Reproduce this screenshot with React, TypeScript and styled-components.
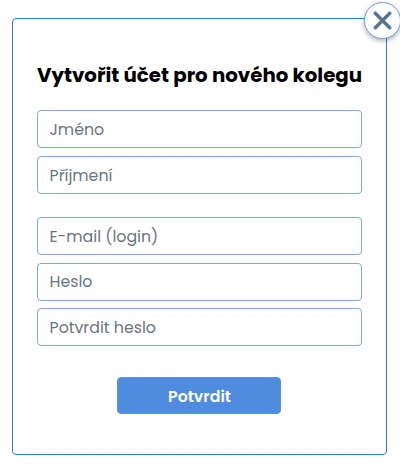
import React from "react";
import styled, { createGlobalStyle } from "styled-components";

const GlobalStyle = createGlobalStyle`
  *, *::before, *::after { box-sizing: border-box; }
  body {
    margin: 0;
    background: #fff;
    font-family: Poppins, Inter, sans-serif;
    overflow: hidden;
  }
`;

const Page = styled.main`
  height: 465px;
  padding: 18px 13px 10px 12px;
`;

const Dialog = styled.section`
  position: relative;
  width: 375px;
  height: 437px;
  border: 1px solid #2f7bdc;
  border-radius: 4px;
  background: #fff;
  padding: 40px 24px 0;
`;

const CloseButton = styled.button`
  position: absolute;
  top: -17.5px;
  right: -14.5px;
  width: 37px;
  height: 37px;
  padding: 0;
  display: flex;
  align-items: center;
  justify-content: center;
  border: 1px solid #6da0e6;
  border-radius: 50%;
  background: #fff;
  box-shadow: 0 2px 5px rgba(0, 0, 0, 0.32);
`;

const Title = styled.h1`
  margin: 0;
  height: 32px;
  line-height: 32px;
  font-size: 19.8px;
  font-weight: 700;
  white-space: nowrap;
  color: #000;
`;

const Form = styled.form`
  display: flex;
  flex-direction: column;
  gap: 23px;
  padding-top: 19px;
`;

const FieldGroup = styled.div<{ $gap: number }>`
  display: flex;
  flex-direction: column;
  gap: ${(p) => p.$gap}px;
`;

const Field = styled.input`
  width: 325px;
  height: 38px;
  padding: 0 11.5px;
  border: 1px solid #7ca8e8;
  border-radius: 4px;
  background: #fff;
  font: 400 15.8px Poppins, Inter, sans-serif;
  outline: none;

  &::placeholder {
    color: #6c757d;
    opacity: 1;
  }
`;

const SubmitButton = styled.button`
  align-self: center;
  width: 164px;
  height: 37px;
  margin: 8px 1px 0 0;
  padding: 2px 0 0 1px;
  border: 1px solid #5a93e0;
  border-radius: 4px;
  background: #4f8cde;
  color: #fff;
  font: 600 15.8px Poppins, Inter, sans-serif;
`;

export default function App() {
  return (
    <>
      <GlobalStyle />
      <Page>
        <Dialog aria-labelledby="title">
          <CloseButton type="button" aria-label="Zavřít">
            <svg width="19" height="19" viewBox="0 0 19 19" aria-hidden="true">
              <g fill="none" strokeLinecap="round">
                <path d="M2.3 2.3 16.7 16.7M16.7 2.3 2.3 16.7" stroke="#4f8cde" strokeWidth="3.7" />
                <path d="M2.4 2.4 16.6 16.6M16.6 2.4 2.4 16.6" stroke="#666b72" strokeWidth="2.1" />
              </g>
            </svg>
          </CloseButton>
          <Title id="title">Vytvořit účet pro nového kolegu</Title>
          <Form onSubmit={(e) => e.preventDefault()}>
            <FieldGroup $gap={8}>
              <Field placeholder="Jméno" />
              <Field placeholder="Příjmení" />
            </FieldGroup>
            <FieldGroup $gap={7.5}>
              <Field placeholder="E-mail (login)" />
              <Field placeholder="Heslo" />
              <Field placeholder="Potvrdit heslo" />
            </FieldGroup>
            <SubmitButton type="submit">Potvrdit</SubmitButton>
          </Form>
        </Dialog>
      </Page>
    </>
  );
}
